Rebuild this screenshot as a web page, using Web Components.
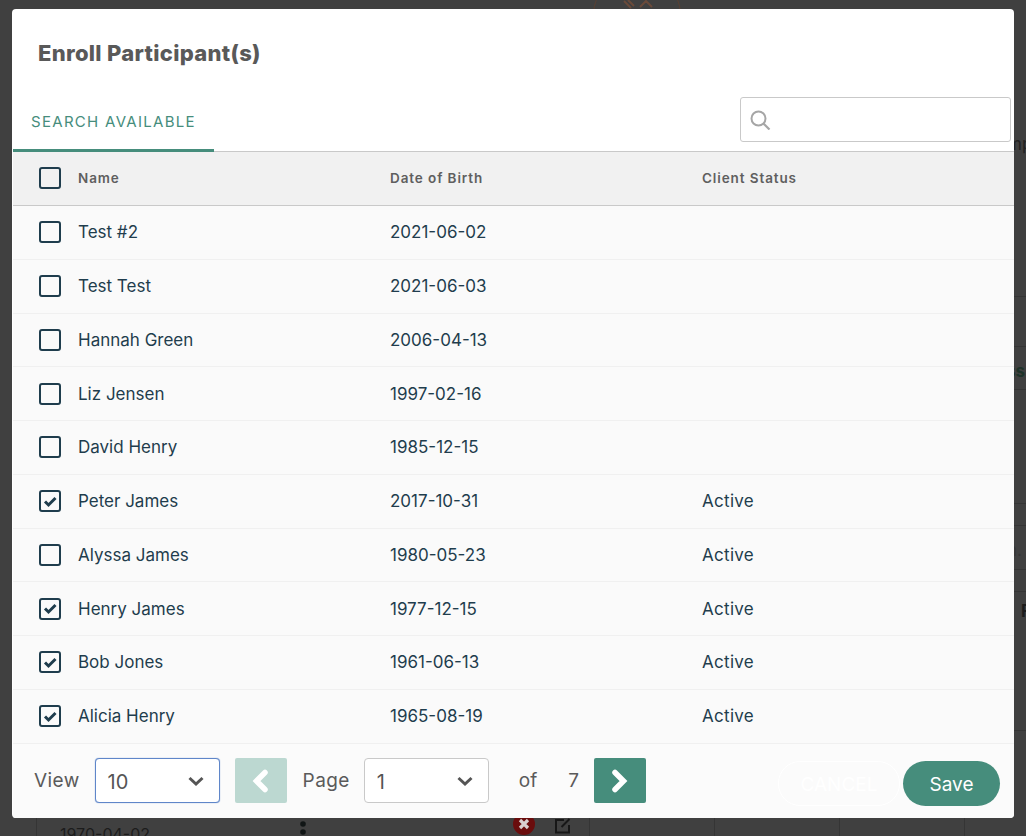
<!DOCTYPE html>
<html>
<head>
<meta charset="utf-8">
<title>Enroll Participant(s)</title>
<style>
  html, body { margin: 0; height: 100%; }
  body { background: #404040; overflow: hidden; font-family: Inter, "Liberation Sans", sans-serif; }
</style>
</head>
<body>
<page-backdrop></page-backdrop>
<enroll-modal>
  <modal-tabs></modal-tabs>
  <participant-table></participant-table>
  <modal-footer></modal-footer>
</enroll-modal>

<script>
const PARTICIPANTS = [
  { name: "Test #2", dob: "2021-06-02", status: "", checked: false },
  { name: "Test Test", dob: "2021-06-03", status: "", checked: false },
  { name: "Hannah Green", dob: "2006-04-13", status: "", checked: false },
  { name: "Liz Jensen", dob: "1997-02-16", status: "", checked: false },
  { name: "David Henry", dob: "1985-12-15", status: "", checked: false },
  { name: "Peter James", dob: "2017-10-31", status: "Active", checked: true },
  { name: "Alyssa James", dob: "1980-05-23", status: "Active", checked: false },
  { name: "Henry James", dob: "1977-12-15", status: "Active", checked: true },
  { name: "Bob Jones", dob: "1961-06-13", status: "Active", checked: true },
  { name: "Alicia Henry", dob: "1965-08-19", status: "Active", checked: true },
];

class PageBackdrop extends HTMLElement {
  connectedCallback() {
    const shadowRoot = this.attachShadow({ mode: "open" });
    shadowRoot.innerHTML = `
    <style>
    :host {
      position: absolute;
      inset: 0;
      overflow: hidden;
      color: #222;
      font-size: 17px;
    }
    .logo {
      position: absolute;
      left: 593px;
      top: -29px;
      width: 88px;
      height: 88px;
      border: 1px solid #5a4032;
      border-radius: 50%;
      box-sizing: border-box;
    }
    .line { position: absolute; background: #353535; }
    .bit { position: absolute; }
    </style>
    <div class="logo"></div>
    <svg class="bit" style="left:622px;top:0" width="32" height="10" viewBox="0 0 32 10" fill="none" stroke="#6a4a3a" stroke-width="2"><path d="M2 1l7 7M6 0l6 6M18 7l6-6 6 6"/></svg>
    <div class="line" style="left:1014px;right:0;top:296px;height:1px"></div>
    <div class="line" style="left:1014px;right:0;top:346px;height:1px"></div>
    <div class="line" style="left:1014px;right:0;top:389px;height:1px"></div>
    <div class="line" style="left:1014px;right:0;top:503px;height:1px"></div>
    <div class="line" style="left:1014px;right:0;top:525px;height:1px"></div>
    <div class="line" style="left:1014px;right:0;top:569px;height:1px"></div>
    <div class="line" style="left:1014px;right:0;top:591px;height:1px"></div>
    <div class="line" style="left:1014px;right:0;top:730px;height:1px"></div>
    <div class="line" style="left:36px;width:1px;top:818px;bottom:0"></div>
    <div class="line" style="left:589px;width:1px;top:818px;bottom:0"></div>
    <div class="line" style="left:714px;width:1px;top:818px;bottom:0"></div>
    <div class="line" style="left:839px;width:1px;top:818px;bottom:0"></div>
    <div class="line" style="left:964px;width:1px;top:818px;bottom:0"></div>
    <div class="bit" style="left:60px;top:824px;color:#1c1c1c;font-size:16px">1970-04-02</div>
    <div class="bit" style="left:1007px;top:134px;color:#222">mp</div>
    <div class="bit" style="left:1006px;top:361px;color:#1e3329;font-weight:700">ss</div>
    <div class="bit" style="left:1007px;top:540px;color:#363636">n.</div>
    <div class="bit" style="left:1021px;top:601px;color:#1c1c1c;font-weight:700">F</div>
    <svg class="bit" style="left:298px;top:819px" width="12" height="17"><circle cx="5" cy="5" r="2.800" fill="#101515"/><circle cx="5" cy="13" r="2.800" fill="#101515"/></svg>
    <svg class="bit" style="left:512px;top:815px" width="24" height="21" viewBox="0 0 24 21"><circle cx="12" cy="9" r="11" fill="#6a0d0d"/><path d="M8 5l8 8M16 5l-8 8" stroke="#d8d0d0" stroke-width="3.200"/></svg>
    <svg class="bit" style="left:554px;top:817px" width="18" height="17" viewBox="0 0 18 17"><path d="M10 3H2v12.500h13V8M7.500 10l8-8" fill="none" stroke="#171717" stroke-width="2"/></svg>
  `;
  }
}

class EnrollModal extends HTMLElement {
  connectedCallback() {
    const shadowRoot = this.attachShadow({ mode: "open" });
    shadowRoot.innerHTML = `
    <style>
    :host {
      background: #fff;
      border-radius: 4px;
      box-sizing: border-box;
      display: flex;
      flex-direction: column;
      height: 809px;
      left: 12px;
      overflow: hidden;
      position: absolute;
      top: 9px;
      width: 1002px;
    }
    h1 {
      color: #595959;
      font-size: 22px;
      font-weight: 800;
      height: 58px;
      letter-spacing: 0.3px;
      line-height: 28px;
      margin: 0;
      padding: 30px 0 0 26px;
    }
    </style>
    <h1>Enroll Participant(s)</h1>
    <slot></slot>
  `;
  }
}

class ModalTabs extends HTMLElement {
  connectedCallback() {
    const shadowRoot = this.attachShadow({ mode: "open" });
    shadowRoot.innerHTML = `
    <style>
    :host {
      align-items: flex-end;
      border-bottom: 1px solid #c9c9c9;
      display: flex;
      height: 54px;
      justify-content: space-between;
      margin-left: 1px;
    }
    .tab {
      border-bottom: 3px solid #468d7c;
      box-sizing: border-box;
      color: #468d7c;
      font-size: 15px;
      height: 54px;
      letter-spacing: 1.3px;
      line-height: 20px;
      margin-bottom: -1px;
      padding: 14px 0 0 18px;
      width: 201px;
    }
    .search {
      align-items: center;
      border: 1px solid #c9c9c9;
      border-radius: 3px;
      box-sizing: border-box;
      display: flex;
      height: 45px;
      margin: 0 3px 9px 0;
      padding-left: 9px;
      width: 271px;
    }
    svg { display: block; }
    </style>
    <div class="tab">SEARCH AVAILABLE</div>
    <div class="search">
      <svg width="21" height="20" viewBox="0 0 21 20" fill="none" stroke="#a6a6a6" stroke-width="2"><circle cx="8.500" cy="8.500" r="7"/><path d="M13.500 13.500l6 6" stroke-width="2.200"/></svg>
    </div>
  `;
  }
}

class ParticipantTable extends HTMLElement {
  connectedCallback() {
    const shadowRoot = this.attachShadow({ mode: "open" });
    const rows = PARTICIPANTS.map((p) => `
      <div class="row">
        <check-box ${p.checked ? "checked" : ""}></check-box>
        <div>${p.name}</div>
        <div>${p.dob}</div>
        <div class="status">${p.status}</div>
      </div>`).join("");
    shadowRoot.innerHTML = `
    <style>
    :host {
      display: block;
      flex: none;
      margin-left: 1px;
    }
    .row, .head {
      align-items: center;
      box-sizing: border-box;
      display: grid;
      grid-template-columns: 39px 312px 312px 1fr;
      padding-left: 26px;
    }
    .head {
      background: #f1f1f1;
      border-bottom: 1px solid #c9c9c9;
      color: #5f5f5f;
      font-size: 13.5px;
      font-weight: 600;
      height: 54px;
      letter-spacing: 0.9px;
      padding-bottom: 1px;
    }
    .row {
      background: #fafafa;
      border-bottom: 1px solid #f0f0f0;
      color: #1f3d4d;
      font-size: 17px;
      height: 53.75px;
    }
    .status { letter-spacing: 0.3px; }
    </style>
    <div class="head">
      <check-box></check-box>
      <div>Name</div>
      <div>Date of Birth</div>
      <div>Client Status</div>
    </div>
    ${rows}
  `;
  }
}

class CheckBox extends HTMLElement {
  connectedCallback() {
    const shadowRoot = this.attachShadow({ mode: "open" });
    const mark = this.hasAttribute("checked")
      ? `<svg width="17" height="17" viewBox="0 0 17 17"><path d="M3 8.500l3.500 3.500 7-7" fill="none" stroke="#1f3d4d" stroke-width="3"/></svg>`
      : "";
    shadowRoot.innerHTML = `
    <style>
    :host {
      align-items: center;
      border: 2.5px solid #1f3d4d;
      border-radius: 3px;
      box-sizing: border-box;
      display: flex;
      height: 22px;
      justify-content: center;
      width: 22px;
    }
    svg { display: block; }
    </style>
    ${mark}
  `;
  }
}

class SelectBox extends HTMLElement {
  connectedCallback() {
    const shadowRoot = this.attachShadow({ mode: "open" });
    shadowRoot.innerHTML = `
    <style>
    :host {
      align-items: center;
      background: #fff;
      border: 1px solid #c9c9c9;
      border-radius: 4px;
      box-sizing: border-box;
      color: #555;
      display: flex;
      font-size: 20px;
      height: 45px;
      justify-content: space-between;
      padding: 3px 14px 0 12px;
    }
    :host([focused]) {
      border-color: #5f86c9;
      box-shadow: 0 0 1px #5f86c9;
    }
    svg { display: block; margin-top: -3px; }
    </style>
    <slot></slot>
    <svg width="18" height="12" viewBox="0 0 18 12"><path d="M2.500 3L9 9l6.500-6" fill="none" stroke="#555" stroke-width="3"/></svg>
  `;
  }
}

class PagerButton extends HTMLElement {
  connectedCallback() {
    const shadowRoot = this.attachShadow({ mode: "open" });
    const left = this.getAttribute("dir") === "prev";
    shadowRoot.innerHTML = `
    <style>
    :host {
      align-items: center;
      background: #468d7c;
      border-radius: 2px;
      display: flex;
      height: 45px;
      justify-content: center;
      width: 52px;
    }
    :host([disabled]) { background: #bcd8d1; }
    svg { display: block; }
    </style>
    <svg width="22" height="28" viewBox="0 0 22 28"><path d="${left ? "M15 5.500L6.500 14l8.500 8.500" : "M6 5.500l8.500 8.500L6 22.500"}" fill="none" stroke="#fff" stroke-width="5.500" stroke-linecap="round" stroke-linejoin="miter"/></svg>
  `;
  }
}

class ModalFooter extends HTMLElement {
  connectedCallback() {
    const shadowRoot = this.attachShadow({ mode: "open" });
    shadowRoot.innerHTML = `
    <style>
    :host {
      align-items: center;
      background: #fbfbfb;
      color: #5a5a5a;
      display: flex;
      flex: 1;
      font-size: 19px;
      margin-left: 1px;
      padding: 0 14px 0 21px;
    }
    .first { letter-spacing: 0.4px; }
    .view { width: 125px; margin-left: 15px; }
    .page { width: 125px; margin-left: 14px; }
    .prev { margin-left: 15px; }
    .label { margin-left: 16px; letter-spacing: 0.4px; }
    .of { margin-left: 30px; }
    .total { margin-left: 31px; }
    .next { margin-left: 15px; }
    .cancel {
      border: 1px solid #fff;
      border-radius: 22px;
      box-sizing: border-box;
      color: #fff;
      flex: none;
      font-size: 19px;
      height: 45px;
      line-height: 45px;
      margin: 6px 0 0 auto;
      text-align: center;
      width: 122px;
    }
    .save {
      background: #468d7c;
      border-radius: 22.500px;
      color: #fff;
      flex: none;
      font-size: 19px;
      height: 45px;
      line-height: 47px;
      margin: 6px 0 0 3px;
      text-align: center;
      width: 97px;
    }
    </style>
    <span class="first">View</span>
    <select-box class="view" focused>10</select-box>
    <pager-button class="prev" dir="prev" disabled></pager-button>
    <span class="label">Page</span>
    <select-box class="page">1</select-box>
    <span class="of">of</span>
    <span class="total">7</span>
    <pager-button class="next" dir="next"></pager-button>
    <div class="cancel">CANCEL</div>
    <div class="save">Save</div>
  `;
  }
}

window.customElements.define("page-backdrop", PageBackdrop);
window.customElements.define("enroll-modal", EnrollModal);
window.customElements.define("modal-tabs", ModalTabs);
window.customElements.define("participant-table", ParticipantTable);
window.customElements.define("check-box", CheckBox);
window.customElements.define("select-box", SelectBox);
window.customElements.define("pager-button", PagerButton);
window.customElements.define("modal-footer", ModalFooter);
</script>
</body>
</html>
